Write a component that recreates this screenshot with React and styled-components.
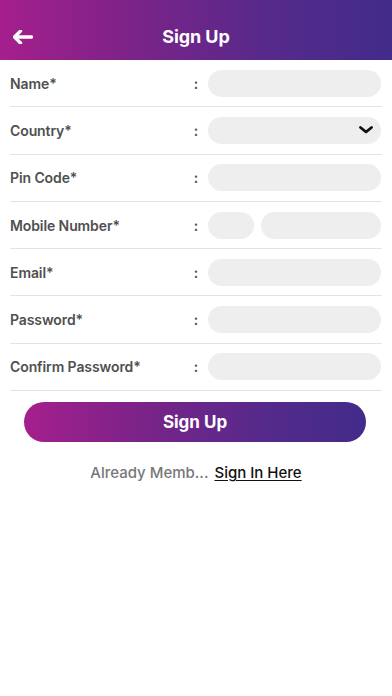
import React from "react";
import styled, { createGlobalStyle } from "styled-components";

const Global = createGlobalStyle`
  html, body { margin: 0; padding: 0; background: #fff; }
  body { font-family: Inter, "Open Sans", sans-serif; -webkit-font-smoothing: antialiased; }
  * { box-sizing: border-box; }
`;

const Page = styled.div`
  width: 392px;
  min-height: 696px;
  background: #fff;
`;

const gradient = "linear-gradient(90deg, #a51f8d 0%, #7a2388 35%, #552a8b 70%, #422b89 100%)";

const Header = styled.header`
  height: 60px;
  background: ${gradient};
  display: grid;
  grid-template-columns: 48px 1fr 48px;
  align-items: center;
  padding-top: 13px;
`;

const BackButton = styled.button`
  background: none;
  border: 0;
  padding: 0 0 0 13px;
  display: flex;
  align-items: center;
  color: #fff;
  cursor: pointer;
`;

const Title = styled.h1`
  margin: 0;
  text-align: center;
  color: #fff;
  font-size: 18px;
  font-weight: 700;
  letter-spacing: -0.1px;
`;

const Form = styled.div`
  display: flex;
  flex-direction: column;
`;

const Row = styled.div`
  margin: 0 10px;
  height: 47.3px;
  border-bottom: 1px solid #e3e3e3;
  display: grid;
  grid-template-columns: 1fr 8px 173px;
  column-gap: 8px;
  align-items: center;
  padding-right: 1px;
`;

const Label = styled.span`
  font-size: 14px;
  font-weight: 600;
  letter-spacing: -0.1px;
  color: #505050;
`;

const Colon = styled.span`
  font-size: 14px;
  font-weight: 600;
  color: #505050;
  text-align: center;
`;

const Inputs = styled.div`
  display: flex;
  gap: 7px;
`;

const Field = styled.div`
  position: relative;
  height: 27px;
  border-radius: 14px;
  background: #eeeeee;
  flex: ${(p) => (p.$w ? `0 0 ${p.$w}px` : "1 1 auto")};
  display: flex;
  align-items: center;
  justify-content: flex-end;
  padding-right: 8px;
`;

const SubmitButton = styled.button`
  margin: 11px 26px 0 24px;
  height: 40px;
  border: 0;
  border-radius: 20px;
  background: ${gradient};
  color: #fff;
  font-family: Inter, "Open Sans", sans-serif;
  font-size: 17px;
  font-weight: 700;
  cursor: pointer;
`;

const Footer = styled.p`
  margin: 22px 0 0;
  text-align: center;
  font-size: 15px;
  font-weight: 500;
  line-height: 18px;
  color: #777777;
`;

const SignInLink = styled.a`
  color: #111;
  text-decoration: underline;
  text-underline-offset: 2px;
  margin-left: 6px;
`;

const Chevron = () => (
  <svg width="14" height="8" viewBox="0 0 14 8">
    <path d="M1.5 1.5 L7 6 L12.5 1.5" fill="none" stroke="#111" strokeWidth="2.8" strokeLinecap="round" strokeLinejoin="round" />
  </svg>
);

const BackArrow = () => (
  <svg width="20" height="14" viewBox="0 0 20 14">
    <path d="M7.5 1 L1.5 7 L7.5 13" fill="none" stroke="#fff" strokeWidth="3.4" strokeLinecap="round" strokeLinejoin="round" />
    <path d="M2.5 7 H18.5" fill="none" stroke="#fff" strokeWidth="3.4" strokeLinecap="round" />
  </svg>
);

const fields = [
  { label: "Name*" },
  { label: "Country*", select: true },
  { label: "Pin Code*" },
  { label: "Mobile Number*", mobile: true },
  { label: "Email*" },
  { label: "Password*" },
  { label: "Confirm Password*" },
];

export default function App() {
  return (
    <Page>
      <Global />
      <Header>
        <BackButton aria-label="Back"><BackArrow /></BackButton>
        <Title>Sign Up</Title>
        <span />
      </Header>
      <Form>
        {fields.map((f) => (
          <Row key={f.label}>
            <Label>{f.label}</Label>
            <Colon>:</Colon>
            <Inputs>
              {f.mobile ? (
                <>
                  <Field $w={46} />
                  <Field />
                </>
              ) : (
                <Field>{f.select && <Chevron />}</Field>
              )}
            </Inputs>
          </Row>
        ))}
        <SubmitButton>Sign Up</SubmitButton>
        <Footer>
          Already Memb...
          <SignInLink href="#">Sign In Here</SignInLink>
        </Footer>
      </Form>
    </Page>
  );
}
